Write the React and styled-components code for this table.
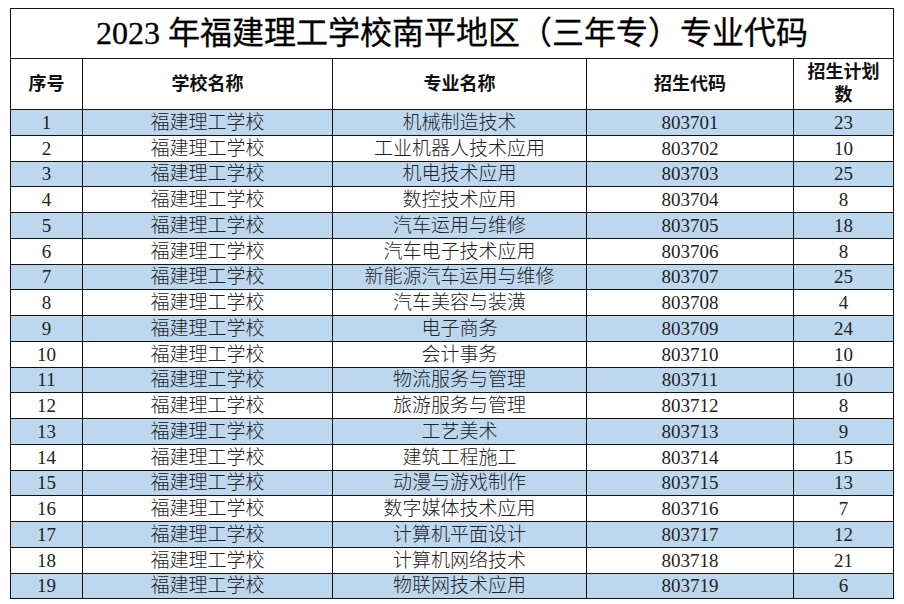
import styled, { createGlobalStyle } from "styled-components";

const GlobalStyle = createGlobalStyle`
  html, body {
    margin: 0;
    padding: 0;
    background: #fff;
  }
  body {
    font-family: "Liberation Serif", "Noto Sans CJK SC", serif;
    color: #1a1a1a;
  }
`

const Page = styled.div`
  padding: 8px 0 0 10px;
`

const Tabela = styled.table`
  width: 883px;
  border-collapse: collapse;
  table-layout: fixed;
  border: 1.5px solid #111;
`

const TitleCell = styled.th`
  height: 47px;
  padding: 0 0 2px;
  border: 1px solid #111;
  font-size: 32px;
  font-weight: 400;
  line-height: 30px;
  color: #000;
  text-align: center;
  -webkit-text-stroke: 0.3px #000;
`

const HeadCell = styled.th`
  height: 50px;
  padding: 0;
  border: 1px solid #111;
  font-size: 18px;
  font-weight: 700;
  line-height: 23px;
  color: #111;
  text-align: center;
`

const Row = styled.tr`
  height: 25.75px;
  background: ${(p) => (p.$azul ? "#bdd7ee" : "#fff")};
`

const Cell = styled.td`
  padding: 0;
  border: 1px solid #111;
  font-size: 19px;
  font-weight: 300;
  line-height: 19px;
  color: #222;
  text-align: center;
  white-space: nowrap;
`

const dados = [
  ["机械制造技术", "803701", 23],
  ["工业机器人技术应用", "803702", 10],
  ["机电技术应用", "803703", 25],
  ["数控技术应用", "803704", 8],
  ["汽车运用与维修", "803705", 18],
  ["汽车电子技术应用", "803706", 8],
  ["新能源汽车运用与维修", "803707", 25],
  ["汽车美容与装潢", "803708", 4],
  ["电子商务", "803709", 24],
  ["会计事务", "803710", 10],
  ["物流服务与管理", "803711", 10],
  ["旅游服务与管理", "803712", 8],
  ["工艺美术", "803713", 9],
  ["建筑工程施工", "803714", 15],
  ["动漫与游戏制作", "803715", 13],
  ["数字媒体技术应用", "803716", 7],
  ["计算机平面设计", "803717", 12],
  ["计算机网络技术", "803718", 21],
  ["物联网技术应用", "803719", 6],
]

function App() {
  return (
    <Page>
      <GlobalStyle />
      <Tabela>
        <colgroup>
          <col style={{ width: 72 }} />
          <col style={{ width: 250 }} />
          <col style={{ width: 254 }} />
          <col style={{ width: 207 }} />
          <col style={{ width: 100 }} />
        </colgroup>
        <thead>
          <tr>
            <TitleCell colSpan={5}>2023 年福建理工学校南平地区（三年专）专业代码</TitleCell>
          </tr>
          <tr>
            <HeadCell>序号</HeadCell>
            <HeadCell>学校名称</HeadCell>
            <HeadCell>专业名称</HeadCell>
            <HeadCell>招生代码</HeadCell>
            <HeadCell>招生计划<br />数</HeadCell>
          </tr>
        </thead>
        <tbody>
          {dados.map((d, i) => (
            <Row key={d[1]} $azul={i % 2 === 0}>
              <Cell>{i + 1}</Cell>
              <Cell>福建理工学校</Cell>
              <Cell>{d[0]}</Cell>
              <Cell>{d[1]}</Cell>
              <Cell>{d[2]}</Cell>
            </Row>
          ))}
        </tbody>
      </Tabela>
    </Page>
  );
}

export default App;
